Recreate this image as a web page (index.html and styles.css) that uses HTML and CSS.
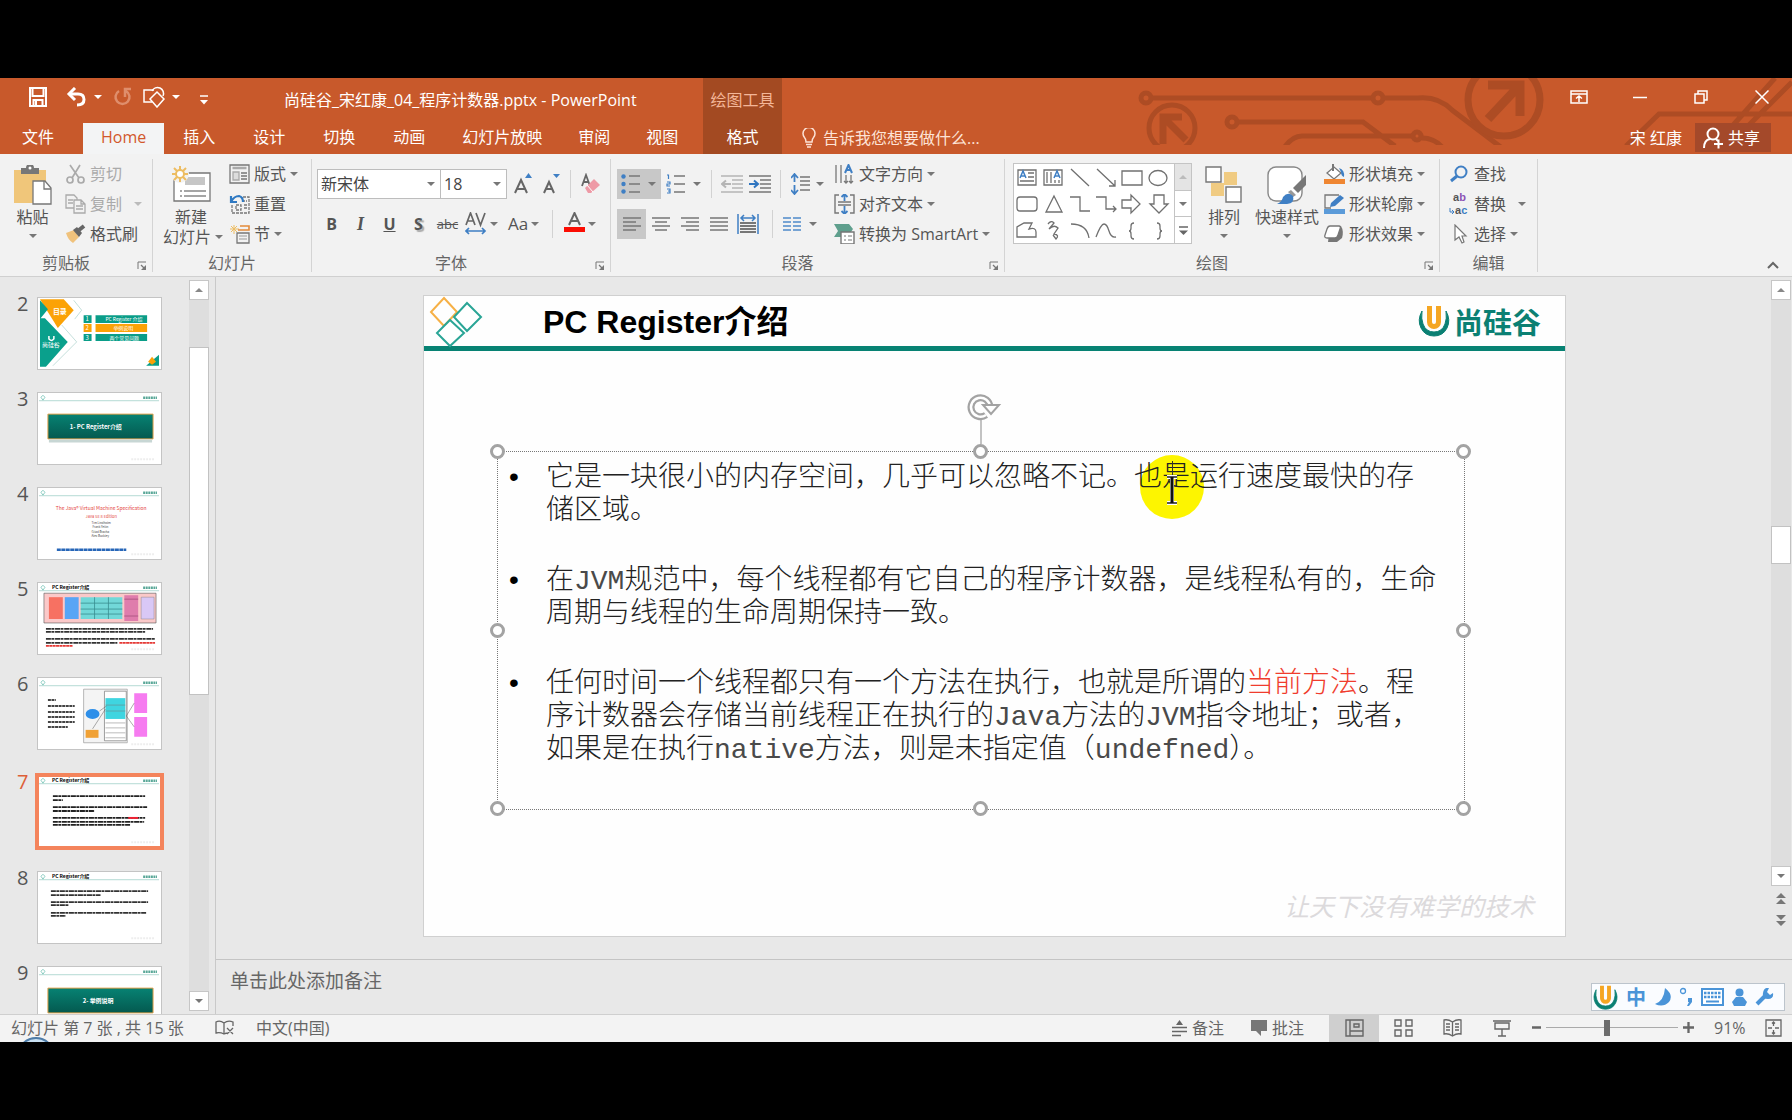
FILE: index.html
```html
<!DOCTYPE html>
<html lang="zh-CN">
<head>
<meta charset="utf-8">
<title>尚硅谷_宋红康_04_程序计数器.pptx - PowerPoint</title>
<link rel="stylesheet" href="styles.css">
</head>
<body>
<svg class="defs" aria-hidden="true">
  <defs>
    <symbol id="launch" viewBox="0 0 10 10"><path d="M1 8V1h8" fill="none" stroke="#777"/><path d="M4 4l4 4" stroke="#777" stroke-width="1.3"/><path d="M9 4v5H4z" fill="#777"/></symbol>
    <symbol id="ulogo" viewBox="0 0 32 32"><path d="M4 6Q-1 15 3 23q4 8 13 8t13-8q4-8-1-17 1 8-1 13-3 8-11 8T5 19Q3 14 4 6z" fill="#0b8073" stroke="#0b8073"/><path d="M11.500 1v16a4.500 4.500 0 0 0 9 0V1" fill="none" stroke="#f5a623" stroke-width="5"/></symbol>
    <linearGradient id="g" x1="0" y1="0" x2="0" y2="1"><stop offset="0" stop-color="#078273"/><stop offset="1" stop-color="#04594f"/></linearGradient>
    <symbol id="thead" viewBox="0 0 124 71"><path d="M3 4l2-2 2 2-2 3z" fill="none" stroke="#5bb8a8" stroke-width=".7"/><path d="M1 7.500h121" stroke="#9fd0c8" stroke-width=".8"/><path d="M106 4.500h14" stroke="#5aa898" stroke-width="2.500" stroke-dasharray="2 .6"/><path d="M94 66.500h24" stroke="#eee" stroke-width="2" stroke-dasharray="2 1"/></symbol>
  </defs>
</svg>
<div class="app">
  <header class="top">
    <svg class="art" width="656" height="67" viewBox="0 0 656 67" fill="none" stroke="#ad4c24" stroke-width="5" aria-hidden="true">
      <circle cx="10" cy="20" r="5"/><path d="M16 20h221"/><circle cx="242" cy="20" r="5"/><path d="M247 20h35q20-2 34 12l50 38"/>
      <circle cx="36" cy="50" r="23"/><path d="M27 66V39h19M28 40l22 22" stroke-width="7"/>
      <circle cx="96" cy="44" r="5"/><path d="M102 44h125l32 24M148 70q8-12 18-12h112"/><circle cx="281" cy="58" r="4"/><path d="M286 60q12 0 20 9"/>
      <circle cx="368" cy="22" r="36" stroke-width="7"/><path d="M352 7h32v31M383 8l-31 33" stroke-width="9"/>
      <path d="M490 68l33-32h133M591 54l48-54M606 54l50-50"/>
    </svg>
    <div class="quick">
      <button class="qb save" aria-label="保存"><svg width="20" height="20" viewBox="0 0 20 20" fill="none" stroke="#fff" stroke-width="2"><path d="M2 1h16v18H2zM4.500 1v8h11V1M5.500 19v-6h9v6"/><path d="M8 14v5" /></svg></button>
      <button class="qb undo" aria-label="撤消"><svg width="21" height="20" viewBox="0 0 21 20" fill="none" stroke="#fff" stroke-width="3"><path d="M3 7h9q6 0 6 5.500T11 18"/><path d="M9 1L3 7l6 6"/></svg></button>
      <i class="caret white"></i>
      <button class="qb redo" aria-label="恢复"><svg width="19" height="20" viewBox="0 0 19 20" fill="none" stroke="#df8e6c" stroke-width="2.500"><path d="M6 4a7 7 0 1 0 7 0M12 10V2h6"/></svg></button>
      <button class="qb shapes" aria-label="形状"><svg width="24" height="22" viewBox="0 0 24 22" fill="none" stroke="#fff" stroke-width="1.500"><path d="M9 16H1V4h10"/><path d="M9 5a6 6 0 1 1 11 5"/><path d="M14 6l7 7-7 8-7-8z"/></svg></button>
      <i class="caret white"></i>
      <button class="qb more" aria-label="自定义快速访问工具栏"><svg width="8" height="10" viewBox="0 0 8 10"><path d="M0 1h8" stroke="#fff" stroke-width="1.500"/><path d="M0 5h8L4 9.500z" fill="#fff"/></svg></button>
      <h1 class="doc">尚硅谷_宋红康_04_程序计数器.pptx - PowerPoint</h1>
    </div>
    <div class="ctx">绘图工具</div>
    <div class="win">
      <button aria-label="功能区显示选项"><svg width="18" height="14" viewBox="0 0 18 14" fill="none" stroke="#fff" stroke-width="1.500"><path d="M1 1h16v12H1zM1 4h16M9 12V6M6 8.500L9 6l3 2.500"/></svg></button>
      <button aria-label="最小化"><svg width="14" height="14" viewBox="0 0 14 14"><path d="M0 7.500h14" stroke="#fff" stroke-width="1.500"/></svg></button>
      <button aria-label="还原"><svg width="14" height="14" viewBox="0 0 14 14" fill="none" stroke="#fff" stroke-width="1.500"><path d="M1 4h9v9H1zM4 4V1h9v9h-3"/></svg></button>
      <button aria-label="关闭"><svg width="14" height="14" viewBox="0 0 14 14"><path d="M.5.5l13 13M13.500.5l-13 13" stroke="#fff" stroke-width="1.500"/></svg></button>
    </div>
    <nav class="tabs">
      <a class="file" href="#">文件</a><a class="on" href="#">Home</a><a href="#">插入</a><a href="#">设计</a><a href="#">切换</a><a href="#">动画</a><a class="slim" href="#">幻灯片放映</a><a class="slim" href="#">审阅</a><a class="slim" href="#">视图</a>
    </nav>
    <a class="ctxtab" href="#">格式</a>
    <div class="tell">
      <svg width="14" height="20" viewBox="0 0 14 20" fill="none" stroke="#fde3d6" stroke-width="1.500"><path d="M4 14q0-3-1.500-4.500A6 6 0 1 1 11.500 9.500Q10 11 10 14zM4 16.500h6M5 19h4"/></svg>
      <button class="ask">告诉我您想要做什么...</button>
      <button class="user">宋 红康</button>
      <button class="share"><svg width="21" height="22" viewBox="0 0 21 22" fill="none" stroke="#fff" stroke-width="2"><circle cx="10" cy="7" r="5.500"/><path d="M1 21q0-8 6-9M13 12l2 2M11 17h9M15.500 12.500v9"/></svg>共享</button>
    </div>
  </header>

  <section class="ribbon">
    <div class="group clip">
      <div class="body">
        <button class="big"><svg width="38" height="40" viewBox="0 0 38 40"><path d="M0 5h32v33H0z" fill="#f0c67a"/><path d="M7 3h5a4 4 0 0 1 8 0h5v6H7z" fill="#777"/><circle cx="16" cy="3" r="1.500" fill="#fff"/><path d="M19 16h12l6 7v16H19z" fill="#fff" stroke="#777" stroke-width="1.300"/><path d="M30 16v8h7" fill="none" stroke="#777" stroke-width="1.300"/></svg><span>粘贴</span><i class="caret"></i></button>
        <div class="list">
          <button class="row off"><svg width="21" height="20" viewBox="0 0 21 20" fill="none" stroke="#aaa" stroke-width="1.700"><path d="M5 1l9 13M15 1L7 14"/><circle cx="5" cy="16" r="3"/><circle cx="16" cy="16" r="3"/></svg>剪切</button>
          <button class="row off"><svg width="21" height="20" viewBox="0 0 21 20" fill="#f2f2f2" stroke="#aaa" stroke-width="1.300"><path d="M1 1h8l3 3v10H1zM3 6h5M3 9h5"/><path d="M9 6h7l4 4v9H9zM16 6v4h4M11 12h7M11 15h7"/></svg>复制<i class="caret far"></i></button>
          <button class="row"><svg width="21" height="20" viewBox="0 0 21 20"><path d="M1 9l8-3 5 7-6 6q-5-3-7-10z" fill="#f0c27c"/><path d="M8 6l4-3 5 6-3 4z" fill="#666"/><path d="M14 6l5-4" stroke="#666" stroke-width="4"/></svg>格式刷</button>
        </div>
      </div>
      <div class="name">剪贴板<svg class="la"><use href="#launch"/></svg></div>
    </div>

    <div class="group slides">
      <div class="body">
        <button class="big"><svg width="40" height="40" viewBox="0 0 40 40"><path d="M3 8h36v28H3z" fill="#fff" stroke="#777" stroke-width="1.300"/><path d="M14 12h20v8H14z" fill="#c6c6c6"/><path d="M9 26h2M9 31h2M13 26h22M13 31h22" stroke="#888" stroke-width="1.300"/><circle cx="9" cy="9" r="9" fill="#f2f2f2"/><path d="M9 1v16M1 9h16M3 3l12 12M15 3L3 15" stroke="#edbd62" stroke-width="2"/><circle cx="9" cy="9" r="4" fill="#fff" stroke="#edbd62" stroke-width="2"/></svg><span>新建</span><span class="l2">幻灯片<i class="caret"></i></span></button>
        <div class="list">
          <button class="row"><svg width="21" height="20" viewBox="0 0 21 20" fill="none" stroke="#777" stroke-width="1.300"><path d="M1 1h19v18H1z"/><path d="M3.500 4h14" stroke="#aaa" stroke-width="2.500"/><path d="M4 8h6v8H4z" fill="#ddd" stroke="#aaa"/><path d="M12 9h6M12 12h6M12 15h6"/></svg>版式<i class="caret"></i></button>
          <button class="row"><svg width="21" height="20" viewBox="0 0 21 20" fill="none" stroke="#777" stroke-width="1.300"><path d="M14 3h6v16H3v-8M13 7h5M7 11h5v5H7zM15 11h3M15 14h3" stroke-dasharray="3 1"/><path d="M2 8q3-6 8-6 4 1 4 6M2 2v6h6" stroke="#2f79c2" stroke-width="2.200"/></svg>重置</button>
          <button class="row"><svg width="21" height="20" viewBox="0 0 21 20" fill="none"><path d="M5 1v9M1 5h9M2 2l6 6M8 2L2 8" stroke="#edbd62"/><path d="M11 2h9v4H9" stroke="#e38a3a" stroke-width="1.600"/><path d="M8 9h12v10H8z" stroke="#777" stroke-width="1.300"/><path d="M10 12h8M10 15h8" stroke="#999"/></svg>节<i class="caret"></i></button>
        </div>
      </div>
      <div class="name">幻灯片</div>
    </div>

    <div class="group font">
      <div class="body two">
        <div class="line">
          <label class="combo face"><select aria-label="字体"><option>新宋体</option></select><i class="caret"></i></label>
          <label class="combo size"><select aria-label="字号"><option>18</option></select><i class="caret"></i></label>
          <button class="tb grow" aria-label="增大字号"><svg width="20" height="22" viewBox="0 0 20 22"><path d="M1 20L7 7l6 13M3 16h8" stroke="#666" stroke-width="2" fill="none"/><path d="M11 5l3.500-5L18 5z" fill="#3f7fc4"/></svg></button>
          <button class="tb" aria-label="减小字号"><svg width="20" height="22" viewBox="0 0 20 22"><path d="M2 20L7 9l5 11M4 16h6" stroke="#666" stroke-width="2" fill="none"/><path d="M11 1l3.500 4L18 1z" fill="#3f7fc4"/></svg></button>
          <i class="bar"></i>
          <button class="tb" aria-label="清除所有格式"><svg width="20" height="22" viewBox="0 0 20 22"><path d="M1 13L5 2l4 11M2 9h6" stroke="#666" stroke-width="1.800" fill="none"/><path d="M4 15l9-9 6 6-9 8H7z" fill="#ee9aa6"/><path d="M6 12l6 7" stroke="#fff"/></svg></button>
        </div>
        <div class="line">
          <button class="fb b">B</button><button class="fb i">I</button><button class="fb u">U</button><button class="fb s">S</button><button class="fb x">abc</button>
          <button class="fc" aria-label="字符间距"><svg width="22" height="24" viewBox="0 0 22 24"><path d="M1 13L5.500 1 10 13M2.500 9h6M11 1l4.500 12L20 1" stroke="#666" stroke-width="1.700" fill="none"/><path d="M1 19h19M4 16l-3 3 3 3M17 16l3 3-3 3" stroke="#3f7fc4" stroke-width="1.700" fill="none"/></svg><i class="caret"></i></button>
          <button class="fc aa">Aa<i class="caret"></i></button>
          <i class="bar"></i>
          <button class="fc color" aria-label="字体颜色"><svg width="21" height="24" viewBox="0 0 21 24"><path d="M5 13L10.500 1 16 13M7 9h7" stroke="#666" stroke-width="2" fill="none"/><path d="M0 15h21v5H0z" fill="#fb0d03"/></svg><i class="caret"></i></button>
        </div>
      </div>
      <div class="name">字体<svg class="la"><use href="#launch"/></svg></div>
    </div>

    <div class="group para">
      <div class="body">
        <div class="two">
          <div class="line">
            <button class="pc sel" aria-label="项目符号"><svg width="19" height="20" viewBox="0 0 19 20"><path d="M8 2h11M8 10h11M8 18h11" stroke="#777" stroke-width="1.500"/><g fill="#3f7fc4"><circle cx="2.500" cy="2.500" r="2.200"/><circle cx="2.500" cy="10" r="2.200"/><circle cx="2.500" cy="17.500" r="2.200"/></g></svg><i class="caret"></i></button>
            <button class="pc num" aria-label="编号"><svg width="19" height="20" viewBox="0 0 19 20"><path d="M8 2h11M8 10h11M8 18h11" stroke="#777" stroke-width="1.500"/><path d="M1 1h1.500v4M1 8h3v2H1v2h3M1 15h3v4H1M2 17h2" stroke="#3f7fc4" stroke-width="1.200" fill="none"/></svg><i class="caret"></i></button>
            <i class="bar"></i>
            <button class="pb" aria-label="降低列表级别"><svg width="22" height="18" viewBox="0 0 22 18" stroke="#b5b5b5" fill="none" stroke-width="1.500"><path d="M0 1h22M11 5h11M11 9h11M11 13h11M0 17h22"/><path d="M10 9H1M5 5.500L1 9l4 3.500" stroke-width="2"/></svg></button>
            <button class="pb" aria-label="提高列表级别"><svg width="22" height="18" viewBox="0 0 22 18" stroke="#777" fill="none" stroke-width="1.500"><path d="M0 1h22M11 5h11M11 9h11M11 13h11M0 17h22"/><path d="M0 9h9M5 5.500L9 9l-4 3.500" stroke="#2f75c0" stroke-width="2"/></svg></button>
            <i class="bar near"></i>
            <button class="pc ls" aria-label="行距"><svg width="20" height="22" viewBox="0 0 20 22"><path d="M9 4h10M9 8h10M9 12h10M9 17h10" stroke="#777" stroke-width="1.500"/><path d="M3.500 1v8M0 5l3.500-4L7 5M3.500 12v9M0 17l3.500 4L7 17" stroke="#3f7fc4" stroke-width="1.800" fill="none"/></svg><i class="caret"></i></button>
          </div>
          <div class="line">
            <button class="al sel" aria-label="左对齐"><svg width="18" height="14" viewBox="0 0 18 14"><path d="M0 1h18M0 5h13M0 9h18M0 13h13" stroke="#777" stroke-width="1.500"/></svg></button>
            <button class="al" aria-label="居中"><svg width="18" height="14" viewBox="0 0 18 14"><path d="M0 1h18M3 5h12M0 9h18M3 13h12" stroke="#777" stroke-width="1.500"/></svg></button>
            <button class="al" aria-label="右对齐"><svg width="18" height="14" viewBox="0 0 18 14"><path d="M0 1h18M5 5h13M0 9h18M5 13h13" stroke="#777" stroke-width="1.500"/></svg></button>
            <button class="al" aria-label="两端对齐"><svg width="18" height="14" viewBox="0 0 18 14"><path d="M0 1h18M0 5h18M0 9h18M0 13h18" stroke="#777" stroke-width="1.500"/></svg></button>
            <button class="al" aria-label="分散对齐"><svg width="22" height="20" viewBox="0 0 22 20" fill="none"><path d="M1 0v20M21 0v20M4 4h14M7 1L4 4l3 3M15 1l3 3-3 3" stroke="#3f7fc4" stroke-width="1.500"/><path d="M3 9h16M3 12h16M3 15h16M3 18h16" stroke="#777" stroke-width="1.800"/></svg></button>
            <i class="bar"></i>
            <button class="pc cols" aria-label="分栏"><svg width="18" height="14" viewBox="0 0 18 14"><path d="M0 1h8M10 1h8M0 5h8M10 5h8M0 9h8M10 9h8M0 13h8M10 13h8" stroke="#4f8bca" stroke-width="1.600"/></svg><i class="caret"></i></button>
          </div>
        </div>
        <div class="list">
          <button class="row"><svg width="21" height="20" viewBox="0 0 21 20" fill="none" stroke="#777" stroke-width="1.300"><path d="M2 1v18M7 1v18M12 11v8M17 11v8M10 17l2 2 2-2M15 17l2 2 2-2"/><path d="M11 9l3.500-8L18 9M12 6h5" stroke="#3f7fc4" stroke-width="2"/></svg>文字方向<i class="caret"></i></button>
          <button class="row"><svg width="21" height="20" viewBox="0 0 21 20" fill="none" stroke="#777" stroke-width="1.400"><path d="M5 1H1v18h4M16 1h4v18h-4M4 8h13M4 11h13"/><path d="M10.500 0v7M7.500 3l3-3 3 3M10.500 12v8M7.500 17l3 3 3-3" stroke="#3f7fc4" stroke-width="1.800"/></svg>对齐文本<i class="caret"></i></button>
          <button class="row"><svg width="21" height="20" viewBox="0 0 21 20"><path d="M0 0h15l4 5-2 3H7v5H0l4-6z" fill="#5f9f8d"/><path d="M7 8h13v12H7z" fill="#fff" stroke="#777" stroke-width="1.400"/><path d="M10 12h2M14 12h4M10 16h2M14 16h4" stroke="#777"/></svg>转换为 SmartArt<i class="caret"></i></button>
        </div>
      </div>
      <div class="name">段落<svg class="la"><use href="#launch"/></svg></div>
    </div>

    <div class="group draw">
      <div class="body">
        <div class="gallery">
          <svg class="cells" viewBox="0 0 160 80" width="160" height="80" fill="none" stroke="#707070" stroke-width="1.300">
            <path d="M4 6h18v15H4zM14 9h6M14 13h6M6 17h14" /><path d="M6 14l3-7 3 7M7 12h4" stroke="#3f7fc4" stroke-width="1.500"/>
            <path d="M30 6h18v15H30zM33 8v11M37 8v11M41 16v3M45 16v3"/><path d="M40 14l3-7 3 7M41 12h4" stroke="#3f7fc4" stroke-width="1.500"/>
            <path d="M57 5l18 17M83 5l18 17M101 16v6h-6M108 7h20v14h-20z"/><ellipse cx="144" cy="14" rx="9" ry="7.500"/>
            <rect x="3" y="33" width="20" height="14" rx="3"/><path d="M40 32l8 16H32zM56 33h10v14h10M82 33h10v12h10M99 42l3 3-3 3M108 36h9v-5l9 9-9 9v-5h-9zM140 31v9h-4l9 9 9-9h-4v-9z"/>
            <path d="M3 73V63l7-4h8l-3 6q7-2 7 3v5zM34 60q3-4 6-1l-5 6q5-5 9-1l-4 6q6 1 2 5l-3-4M57 60q16 0 18 14M82 73q5-13 8-13 3 0 5 7t7 6M120 59q-3 0-3 3v2q0 3-2 3 2 0 2 3v2q0 3 3 3M143 59q3 0 3 3v2q0 3 2 3-2 0-2 3v2q0 3-3 3"/>
          </svg>
          <div class="gbtn"><button class="dim" aria-label="上一行"><i class="caret up"></i></button><button aria-label="下一行"><i class="caret"></i></button><button aria-label="更多形状"><svg width="9" height="9" viewBox="0 0 9 9"><path d="M0 1h9" stroke="#666" stroke-width="1.500"/><path d="M0 4.500h9L4.500 9z" fill="#666"/></svg></button></div>
        </div>
        <button class="big arr"><svg width="38" height="38" viewBox="0 0 38 38"><path d="M19 6h13v13H19zM6 17h13v13H6z" fill="#f0cb82"/><g fill="#fff" stroke="#777" stroke-width="1.400"><path d="M1 1h15v15H1zM21 21h15v15H21z"/></g></svg><span>排列</span><i class="caret"></i></button>
        <button class="big sty"><svg width="40" height="40" viewBox="0 0 40 40"><rect x="1" y="2" width="34" height="34" rx="8" fill="#fff" stroke="#888" stroke-width="1.400"/><path d="M39 10v10l-8 8-5-5z" fill="#777"/><path d="M24 25l5 5-3 2-5-5z" fill="#999"/><path d="M10 39q5-2 6-7 5-6 10-1 2 7-6 8z" fill="#3f7fc4"/></svg><span>快速样式</span><i class="caret"></i></button>
        <div class="list">
          <button class="row"><svg width="21" height="20" viewBox="0 0 21 20"><path d="M3 9l7-6 7 6-7 6z" fill="#fff" stroke="#777" stroke-width="1.300"/><path d="M9 0v7" stroke="#777" stroke-width="2"/><path d="M15 4q6 2 5 9-3-1-3-5z" fill="#3f7fc4"/><path d="M0 15h21v5H0z" fill="#ef8632"/></svg>形状填充<i class="caret"></i></button>
          <button class="row"><svg width="21" height="20" viewBox="0 0 21 20"><path d="M15 1H1v13h6" fill="none" stroke="#777" stroke-width="1.300"/><path d="M6 13l1-4 9-8 4 3-9 8z" fill="#3f7fc4"/><path d="M0 15h21v5H0z" fill="#5b9bd9"/></svg>形状轮廓<i class="caret"></i></button>
          <button class="row"><svg width="21" height="20" viewBox="0 0 21 20"><path d="M6 2h11q3 5 1 12l-5 4H4z" fill="#777"/><path d="M6 2h9q2 0 1 3l-2 6q-1 3-3 3H3q-3 0-2-3l2-6q1-3 3-3z" fill="#fff" stroke="#777" stroke-width="1.300"/></svg>形状效果<i class="caret"></i></button>
        </div>
      </div>
      <div class="name">绘图<svg class="la"><use href="#launch"/></svg></div>
    </div>

    <div class="group edit">
      <div class="body">
        <div class="list">
          <button class="row"><svg width="21" height="20" viewBox="0 0 21 20" fill="none" stroke="#3f7fc4"><circle cx="12" cy="8" r="5.500" stroke-width="2"/><path d="M8 12l-6 5" stroke-width="3"/></svg>查找</button>
          <button class="row"><span class="abac"><span>a<em>b</em></span><span class="ac"><svg width="5" height="6" viewBox="0 0 5 6" fill="none" stroke="#3f7fc4"><path d="M1 0v4h4M3 2l2 2-2 2"/></svg><span>a<em class="blue">c</em></span></span></span>替换<i class="caret far"></i></button>
          <button class="row"><svg width="21" height="20" viewBox="0 0 21 20"><path d="M6 1v15l4-3 3 6 2-1-2-6h4z" fill="#fff" stroke="#777" stroke-width="1.200"/></svg>选择<i class="caret"></i></button>
        </div>
      </div>
      <div class="name">编辑</div>
    </div>
    <button class="fold" aria-label="折叠功能区"><svg width="12" height="8" viewBox="0 0 12 8"><path d="M1 7l5-5 5 5" fill="none" stroke="#666" stroke-width="2"/></svg></button>
  </section>

  <main class="work">
    <aside class="pane">
      <ol class="thumbs">
        <li><span>2</span><svg viewBox="0 0 124 71"><path d="M2 1h24l10 11-16 18z" fill="#fba206"/><path d="M2 2l8 9-8 10zM2 20h5l23 24L8 69H2z" fill="#0aa08c"/><path d="M36 2l8 10-7 9M24 27l15 17-24 24" fill="none" stroke="#9cc9c2" stroke-width=".6"/><text x="15" y="16" font-size="7" font-weight="700" fill="#fff">目录</text><path d="M11 38v3q3 3 5 0v-3" fill="none" stroke="#fff" stroke-width="1.500"/><text x="4" y="49" font-size="6" fill="#fff">尚硅谷</text><path d="M46 17h8v8h-8zM58 17h52v8H58zM46 36h8v7h-8zM58 36h52v7H58z" fill="#0a9d88"/><path d="M46 26h8v8h-8zM58 26h52v8H58z" fill="#fba206"/><g fill="#fff" font-size="6"><text x="48" y="23">1</text><text x="48" y="32">2</text><text x="48" y="42">3</text><text x="68" y="23" font-size="5">PC Register 介绍</text><text x="76" y="32" font-size="5">举例说明</text><text x="72" y="42" font-size="5">两个常见问题</text></g><path d="M109 68l13-11v11z" fill="#0a9d88"/><path d="M111 64l4-5 4 5-4 3z" fill="#fba206"/></svg></li>
        <li><span>3</span><svg viewBox="0 0 124 71"><use href="#thead"/><path d="M10 21h106v25H10z" fill="url(#g)" stroke="#e6a34c"/><path d="M11 48h104" stroke="#c7d6d4" stroke-width="3"/><text x="32" y="36" font-size="6" font-weight="700" fill="#fff">1- PC Register介绍</text></svg></li>
        <li><span>4</span><svg viewBox="0 0 124 71"><use href="#thead"/><g fill="#e4443e" font-size="5"><text x="18" y="22">The Java® Virtual Machine Specification</text><text x="48" y="30" font-size="4">Java SE 8 Edition</text></g><g fill="#444" font-size="3"><text x="54" y="36">Tim Lindholm</text><text x="55" y="40">Frank Yellin</text><text x="54" y="45">Gilad Bracha</text><text x="54" y="49">Alex Buckley</text></g><path d="M19 62h70" stroke="#2766b8" stroke-width="2.500" stroke-dasharray="4 .5"/></svg></li>
        <li><span>5</span><svg viewBox="0 0 124 71"><use href="#thead"/><text x="14" y="6" font-size="5" font-weight="700">PC Register介绍</text><path d="M6 10h113v30H6z" fill="#fbc9c9" stroke="#555" stroke-width=".6"/><path d="M11 14h14v22H11z" fill="#f77162"/><path d="M27 14h14v22H27z" fill="#58a5f5"/><path d="M43 14h42v22H43z" fill="#72d8d8"/><path d="M43 20h42M43 26h42M43 31h42M57 14v22M71 14v22" stroke="#398d90" stroke-width=".8"/><path d="M87 12h14v26H87z" fill="#df7dac"/><path d="M87 16h14M87 33h14" stroke="#a34f7c" stroke-width=".8"/><path d="M104 14h13v22h-13z" fill="#d9c8f6" stroke="#777" stroke-width=".4"/><path d="M8 46h108M8 49h100M8 56h110M8 60h72" stroke="#333" stroke-width="1.800" stroke-dasharray="5 .5 3 .7"/><path d="M82 60h36M8 63h27" stroke="#e53935" stroke-width="1.800" stroke-dasharray="3 .4"/></svg></li>
        <li><span>6</span><svg viewBox="0 0 124 71"><use href="#thead"/><path d="M10 22h8M10 28h27M10 34h27M10 39h27M10 44h27M10 49h20" stroke="#444" stroke-width="2" stroke-dasharray="3 .6"/><path d="M46 11h44v54H46z" fill="#f4f4f4" stroke="#999" stroke-width=".7"/><path d="M67 13h22v50H67z" fill="#fff" stroke="#777" stroke-width=".7"/><path d="M68 20h20v21H68z" fill="#3fd5e0"/><path d="M68 45h20M68 50h20M68 55h20M68 60h20M68 27h20M68 33h20" stroke="#777" stroke-width=".5"/><ellipse cx="55" cy="36" rx="7" ry="5" fill="#2e8fe9"/><path d="M48 52h13v8H48z" fill="#f0a135"/><path d="M97 15h13v20H97zM97 39h13v20H97z" fill="#f67bf0"/><path d="M62 33l7-5M55 51l13-20M89 38l8-13M89 38l8 11" stroke="#555" stroke-width=".5"/></svg></li>
        <li class="cur"><span>7</span><svg viewBox="0 0 124 71"><use href="#thead"/><text x="14" y="6" font-size="5" font-weight="700">PC Register介绍</text><g stroke="#222" stroke-width="1.800" stroke-dasharray="5 .5 3 .6" fill="none"><path d="M15 20h93M15 24h10M15 31h95M15 35h42M15 42h93M15 46h92M15 49h78"/></g><path d="M91 42h10" stroke="#e23" stroke-width="2"/></svg></li>
        <li><span>8</span><svg viewBox="0 0 124 71"><use href="#thead"/><text x="14" y="6" font-size="5" font-weight="700">PC Register介绍</text><g stroke="#333" stroke-width="1.800" stroke-dasharray="5 .5 3 .6"><path d="M13 19h98M13 23h50M13 30h98M13 33h18M13 41h96M13 44h15"/></g></svg></li>
        <li><span>9</span><svg viewBox="0 0 124 71"><use href="#thead"/><path d="M10 21h106v25H10z" fill="url(#g)" stroke="#e6a34c"/><text x="45" y="36" font-size="6" font-weight="700" fill="#fff">2- 举例说明</text></svg></li>
      </ol>
      <div class="scroll left"><button aria-label="向上"><i class="caret up"></i></button><i class="thumb"></i><button aria-label="向下"><i class="caret"></i></button></div>
    </aside>
    <section class="editor">
      <div class="canvas">
        <div class="stage">
          <article class="slide">
            <header class="shead">
              <svg class="dia" width="56" height="50" viewBox="0 0 56 50" fill="none" stroke-width="2"><path d="M20 2l13 14-13 14L7 16z" stroke="#f6b046"/><path d="M43 7l14 14-14 14-13-14z" fill="#fff" stroke="#2aa596"/><path d="M26 24l14 13-14 13-13-13z" fill="#fff" stroke="#2aa596"/></svg>
              <h2>PC Register介绍</h2>
              <div class="brand"><svg width="32" height="32"><use href="#ulogo"/></svg>尚硅谷</div>
            </header>
            <i class="halo"></i>
            <div class="box">
              <ul>
                <li>它是一块很小的内存空间，几乎可以忽略不记。也是运行速度最快的存<br>储区域。</li>
                <li>在<span class="code">JVM</span>规范中，每个线程都有它自己的程序计数器，是线程私有的，生命<br>周期与线程的生命周期保持一致。</li>
                <li>任何时间一个线程都只有一个方法在执行，也就是所谓的<mark>当前方法</mark>。程<br>序计数器会存储当前线程正在执行的<span class="code">Java</span>方法的<span class="code">JVM</span>指令地址；或者，<br>如果是在执行<span class="code">native</span>方法，则是未指定值（<span class="code">undefned</span>）。</li>
              </ul>
              <i class="h nw"></i><i class="h n"></i><i class="h ne"></i><i class="h w"></i><i class="h e"></i><i class="h sw"></i><i class="h so"></i><i class="h se"></i>
              <svg class="rot" width="34" height="60" viewBox="0 0 34 60" fill="none" stroke="#a3a3a3"><path d="M17 28v26" stroke-width="1.300"/><path d="M26 17a9.500 9.500 0 1 0-4 8" stroke-width="7"/><path d="M26 17a9.500 9.500 0 1 0-4 8" stroke="#fff" stroke-width="2.500"/><path d="M19 15h16l-8 9z" fill="#fff" stroke-width="2"/></svg>
            </div>
            <svg class="ibeam" width="12" height="44" viewBox="0 0 12 44"><path d="M6.500 0v18" stroke="#333"/><path d="M1 16h10M1 42h10M6 16v26" stroke="#fff" stroke-width="4"/><path d="M1 16h10M1 42h10" stroke="#222" stroke-width="1.500"/><path d="M6 16v26" stroke="#111" stroke-width="3"/></svg>
            <p class="motto">让天下没有难学的技术</p>
          </article>
        </div>
        <div class="side">
          <div class="scroll right"><button aria-label="向上"><i class="caret up"></i></button><i class="thumb"></i><button aria-label="向下"><i class="caret"></i></button></div>
          <button class="jump" aria-label="上一张幻灯片"><svg width="10" height="12" viewBox="0 0 10 12" fill="#777"><path d="M0 6l5-5 5 5zM0 12l5-5 5 5z"/></svg></button>
          <button class="jump" aria-label="下一张幻灯片"><svg width="10" height="12" viewBox="0 0 10 12" fill="#777"><path d="M0 0h10L5 5zM0 6h10l-5 5z"/></svg></button>
        </div>
      </div>
      <div class="notes">单击此处添加备注</div>
    </section>
    <div class="ime">
      <svg width="25" height="27" viewBox="0 0 32 32"><use href="#ulogo"/></svg><b>中</b>
      <svg width="17" height="20" viewBox="0 0 17 20"><path d="M11 1q9 7 4 14-6 6-14 2 9-3 10-16z" fill="#4a94d8"/></svg>
      <svg width="14" height="20" viewBox="0 0 14 20"><circle cx="4" cy="4" r="2.500" fill="none" stroke="#4a94d8" stroke-width="1.300"/><path d="M9 11h4v4l-3 4H8l2-4H9z" fill="#4a94d8"/></svg>
      <svg width="23" height="18" viewBox="0 0 23 18"><path d="M1 1h21v16H1z" fill="#fff" stroke="#4a94d8" stroke-width="2"/><path d="M3 5h17M3 9h17" stroke="#4a94d8" stroke-width="2.500" stroke-dasharray="2.500 1"/><path d="M5 13.500h13" stroke="#4a94d8" stroke-width="2"/></svg>
      <svg width="15" height="18" viewBox="0 0 15 18" fill="#4a94d8"><circle cx="7.500" cy="4.500" r="4"/><path d="M4 9h7l4 5-2 4H2l-2-4z"/></svg>
      <svg width="19" height="18" viewBox="0 0 19 18"><path d="M2 16l9-9" stroke="#4a94d8" stroke-width="4"/><path d="M14 0l-2 4 3 3 3-2q1 6-5 6t-5-6 6-5z" fill="#4a94d8"/></svg>
    </div>
  </main>

  <footer class="status">
    <span class="pg">幻灯片 第 7 张 , 共 15 张</span>
    <svg class="spell" width="20" height="16" viewBox="0 0 20 16" fill="none" stroke="#666" stroke-width="1.300"><path d="M9 14V3Q5 0 1 2v11q4-1 8 1 2-1 4-1M9 3q4-3 9-1v4M12 14l6-6M12 8l6 6"/></svg>
    <span class="lang">中文(中国)</span>
    <button class="nt"><svg width="15" height="18" viewBox="0 0 15 18"><path d="M4 6l3.500-5L11 6z" fill="#666"/><path d="M0 8.500h15M0 12.500h15M0 16.500h9" stroke="#666" stroke-width="1.400"/></svg>备注</button>
    <button class="cm"><svg width="16" height="16" viewBox="0 0 16 16"><path d="M0 0h16v11h-6v5l-5-5H0z" fill="#777"/></svg>批注</button>
    <button class="vw on" aria-label="普通视图"><svg width="19" height="18" viewBox="0 0 19 18" fill="none" stroke="#666" stroke-width="1.400"><path d="M1 1h17v16H1zM5 1v16M5 12h13M9 5h5v3H9z"/></svg></button>
    <button class="vw" aria-label="幻灯片浏览"><svg width="19" height="18" viewBox="0 0 19 18" fill="none" stroke="#666" stroke-width="1.400"><path d="M1 1h6v6H1zM12 1h6v6h-6zM1 11h6v6H1zM12 11h6v6h-6z"/></svg></button>
    <button class="vw" aria-label="阅读视图"><svg width="19" height="18" viewBox="0 0 19 18" fill="none" stroke="#666" stroke-width="1.300"><path d="M9.500 3Q5 0 1 1v14q4-1 8.500 2 4.500-3 8.500-2V1q-4-1-8.500 2zv14M3 5h4M3 8h4M3 11h4M12 5h4M12 8h4M12 11h4"/></svg></button>
    <button class="vw" aria-label="幻灯片放映"><svg width="18" height="18" viewBox="0 0 18 18" fill="none" stroke="#666" stroke-width="1.400"><path d="M0 2h18M2 4h14v6H2zM9 10v7M5 17h8" /></svg></button>
    <button class="zm" aria-label="缩小"><svg width="9" height="9" viewBox="0 0 9 9"><path d="M0 4.500h9" stroke="#666" stroke-width="2.500"/></svg></button>
    <input class="zr" type="range" min="0" max="100" value="46" aria-label="缩放">
    <button class="zm" aria-label="放大"><svg width="11" height="11" viewBox="0 0 11 11"><path d="M0 5.500h11M5.500 0v11" stroke="#666" stroke-width="2.300"/></svg></button>
    <button class="pct">91%</button>
    <button class="fit" aria-label="使幻灯片适应当前窗口"><svg width="17" height="18" viewBox="0 0 17 18" fill="none" stroke="#666" stroke-width="1.300"><path d="M1 1h15v16H1zM8.500 3v4M8.500 11v4M3 9h4M10 9h4M7 4.500L8.500 3 10 4.500M7 13.500L8.500 15l1.500-1.500"/></svg></button>
    <i class="orb"></i>
  </footer>
</div>
</body>
</html>
```
FILE: styles.css
```css
* { box-sizing: border-box; }
body {
  margin: 0;
  padding: 78px 0;
  background: #000;
  color: #555;
  font: 16px/20px "Open Sans", "Noto Sans CJK SC", sans-serif;
  overflow: hidden;
}
button {
  margin: 0;
  padding: 0;
  border: 0;
  background: none;
  color: inherit;
  font: inherit;
  display: flex;
  align-items: center;
  white-space: nowrap;
}
a { color: inherit; text-decoration: none; }
svg { flex: none; display: block; }
.defs { position: absolute; width: 0; height: 0; }
.app {
  height: calc(100vh - 156px);
  display: flex;
  flex-direction: column;
  background: #e8e8e8;
  overflow: hidden;
}

.caret {
  flex: none;
  width: 0;
  height: 0;
  border: 4px solid transparent;
  border-top-color: #777;
  border-bottom: 0;
}
.caret.white { border-top-color: #fff; }
.caret.up { border: 4px solid transparent; border-bottom-color: #888; border-top: 0; }

/* title bar and tabs */
.top {
  position: relative;
  display: grid;
  grid-template-columns: 703px 79px 1fr;
  grid-template-rows: 45px 31px;
  background: #c8592b;
  color: #fff;
}
.art { position: absolute; right: 0; top: 0; }
.quick { display: flex; align-items: center; padding: 0 0 8px 28px; }
.undo { margin: 0 7px 0 18px; }
.redo { margin: 0 11px 0 11px; }
.shapes { margin-right: 5px; }
.more { margin: 6px 0 0 20px; }
.doc { margin: 6px 0 0 76px; font-size: 16px; font-weight: 400; line-height: 20px; white-space: nowrap; }
.ctx { background: #a34a22; color: #f3b698; display: flex; align-items: center; justify-content: center; padding-bottom: 2px; }
.win { position: relative; display: flex; justify-content: flex-end; padding-bottom: 8px; }
.win button { width: 61px; justify-content: center; }
.tabs { display: flex; }
.tabs a { padding: 0 19px; line-height: 28px; white-space: nowrap; }
.tabs .file { padding: 0 29px 0 22px; }
.tabs .on { background: #f3f4f5; color: #d2582c; padding: 0 18px; }
.tabs .slim { padding: 0 18px; }
.ctxtab { background: #a34a22; text-align: center; line-height: 28px; }
.tell { position: relative; display: flex; align-items: center; padding: 0 0 2px 20px; color: #fde3d6; }
.ask { margin-left: 7px; }
.user { margin-left: auto; color: #fff; }
.share { margin: 0 21px 0 13px; width: 76px; height: 29px; gap: 4px; padding-left: 8px; background: #a4492a; color: #fff; }

/* ribbon */
.ribbon {
  position: relative;
  display: flex;
  height: 123px;
  flex: none;
  padding: 5px 0 0;
  background: #f2f2f2;
  border-bottom: 1px solid #d0d0d0;
}
.group { flex: none; height: 113px; border-right: 1px solid #d4d4d4; display: flex; flex-direction: column; }
.clip { width: 153px; }
.slides { width: 159px; }
.font { width: 299px; }
.para { width: 394px; }
.draw { width: 435px; }
.edit { width: 98px; }
.body { display: flex; flex: none; height: 90px; }
.name { position: relative; text-align: center; line-height: 29px; color: #666; padding-right: 20px; }
.slides .name, .edit .name { padding-right: 0; }
.la { position: absolute; right: 5px; top: 12px; width: 10px; height: 10px; }
.big { flex-direction: column; padding-top: 6px; width: 65px; flex: none; height: 90px; }
.big svg { margin-bottom: 2px; height: 40px; }
.big .caret { margin-top: 7px; }
.big .l2 { display: flex; align-items: center; gap: 4px; padding-left: 4px; }
.big .l2 .caret { margin: 0; }
.slides .big { width: 76px; }
.list { display: flex; flex-direction: column; }
.row { height: 30px; gap: 4px; }
.row .far { margin-left: 8px; }
.off { color: #aaa; }
.off .caret { border-top-color: #bbb; }
.two { display: flex; flex-direction: column; gap: 10px; padding-top: 10px; height: 90px; }
.line { display: flex; align-items: center; height: 30px; }
.font .line { padding-left: 5px; }
.combo { position: relative; display: flex; align-items: center; height: 30px; background: #fff; border: 1px solid #bdbdbd; padding-right: 5px; }
.combo select { appearance: none; border: 0; background: none; font: inherit; color: #444; padding: 0 3px; flex: 1; height: 28px; min-width: 0; }
.face { width: 124px; }
.size { width: 66px; border-left-width: 0; }
.tb { width: 28px; justify-content: center; flex: none; }
.grow { margin-left: 3px; }
.bar { flex: none; width: 1px; height: 28px; background: #d2d2d2; margin: 0 8px; }
.font .bar { margin: 0 6px 0 4px; }
.fb { width: 29px; justify-content: center; flex: none; color: #555; }
.b { font-weight: 700; }
.i { font-family: "Liberation Serif", serif; font-style: italic; font-weight: 700; font-size: 18px; }
.u { text-decoration: underline; font-weight: 700; }
.s { font-weight: 700; text-shadow: 2px 2px 1px #aaa; }
.x { text-decoration: line-through; font-size: 13px; }
.fc { gap: 3px; width: 40px; margin-left: 3px; }
.aa { font-size: 17px; }
.color { margin-left: 5px; }
.para .two { width: 223px; padding-left: 6px; flex: none; }
.pc { gap: 8px; height: 30px; flex: none; }
.sel { background: #c8c8c8; }
.pc.sel { width: 44px; padding-left: 4px; }
.num { margin-left: 5px; }
.para .bar { margin: 0 9px 0 10px; }
.pb { width: 28px; flex: none; }
.para .near { margin: 0 10px 0 3px; }
.ls { gap: 5px; }
.al { width: 29px; height: 30px; justify-content: center; flex: none; }
.cols { margin-left: 1px; }
.gallery { display: flex; margin: 4px 0 0 8px; width: 179px; height: 81px; border: 1px solid #c4c4c4; background: #fff; flex: none; overflow: hidden; }
.gbtn { flex: 1; display: flex; flex-direction: column; border-left: 1px solid #c4c4c4; }
.gbtn button { flex: 1; justify-content: center; }
.gbtn button + button { border-top: 1px solid #c4c4c4; }
.gbtn .dim { background: #e4e4e4; }
.dim .caret.up { border-bottom-color: #bbb; }
.arr { margin-left: 7px; width: 50px; }
.sty { width: 74px; margin-left: 1px; }
.edit .list { margin-left: 9px; }
.abac { width: 21px; font: 700 11px/13px "Liberation Sans", sans-serif; display: flex; flex-direction: column; }
.abac em { color: #8b52b5; font-style: normal; }
.abac .blue { color: #3f7fc4; }
.ac { display: flex; align-items: center; gap: 1px; }
.fold { position: absolute; right: 13px; bottom: 7px; }

/* workspace */
.work { position: relative; flex: 1; min-height: 0; display: flex; }
.pane { flex: none; width: 216px; display: flex; overflow: hidden; border-right: 1px solid #c9c9c9; padding-right: 6px; }
.thumbs { list-style: none; margin: 0; padding: 21px 0 0; width: 189px; font: 20px/20px "Open Sans", sans-serif; }
.thumbs li { display: flex; height: 71px; margin-bottom: 24px; }
.thumbs li span { width: 38px; padding-left: 17px; margin-top: -4px; flex: none; }
.thumbs svg { width: 123px; height: 71px; background: #fff; outline: 1px solid #c4c4c4; font-family: "Noto Sans CJK SC", sans-serif; }
.thumbs .cur { margin: 27px 0 25px; color: #dd5f38; }
.thumbs .cur svg { outline: 4px solid #f4845c; outline-offset: -1px; }
.scroll { display: flex; flex-direction: column; width: 20px; background: #dedede; }
.scroll button { height: 20px; border: 1px solid #c6c6c6; background: #fff; justify-content: center; flex: none; }
.scroll button:last-child { margin-top: auto; }
.thumb { display: block; background: #fff; border: 1px solid #c2c2c2; }
.left { margin: 3px 0; }
.left .thumb { margin-top: 47px; height: 348px; }
.editor { flex: 1; display: flex; flex-direction: column; min-width: 0; }
.canvas { flex: 1; display: flex; min-height: 0; }
.stage { flex: 1; padding: 18px 0 0 2px; display: flex; justify-content: center; align-items: flex-start; }
.side { width: 21px; padding: 3px 2px 0 0; display: flex; flex-direction: column; align-items: center; }
.right { height: 606px; }
.right .thumb { margin-top: 226px; height: 38px; }
.jump { height: 23px; }
.notes { height: 55px; flex: none; border-top: 1px solid #c4c4c4; padding: 9px 0 0 14px; font-size: 19px; line-height: 24px; color: #666; }

/* slide */
.slide { position: relative; width: 100%; max-width: 1143px; height: 642px; background: #fefefe; border: 1px solid #d0d0d0; }
.shead { display: flex; align-items: center; height: 55px; border-bottom: 5px solid #078273; }
.dia { overflow: visible; }
.shead h2 { margin: 2px 0 0 63px; font: 700 32px/40px "Liberation Sans", "Noto Sans CJK SC", sans-serif; color: #000; }
.brand { margin: 0 24px 0 auto; display: flex; align-items: center; gap: 4px; font: 700 29px/36px "Noto Sans CJK SC", sans-serif; color: #0b8073; }
.box { position: relative; margin: 100px 0 0 73px; width: 968px; height: 359px; border: 1px dotted #777; }
.box ul { list-style: none; margin: 0; padding: 8px 0 0 48px; font: 300 28px/33px "Liberation Mono", "Noto Sans CJK SC", monospace; color: #222; white-space: nowrap; }
.box li { margin-bottom: 35px; }
.box li::before { content: "•"; display: inline-block; width: 37px; margin-left: -37px; font-family: "Liberation Sans", sans-serif; color: #000; }
.code { color: #4a4a4a; }
.box mark { background: none; color: #f03c2d; }
.h { position: absolute; width: 15px; height: 15px; border: 3px solid #a3a3a3; border-radius: 50%; background: #fff; margin: -8px; }
.nw { left: 0; top: 0; }
.n { left: 50%; top: 0; }
.ne { left: 100%; top: 0; }
.w { left: 0; top: 50%; }
.e { left: 100%; top: 50%; }
.sw { left: 0; top: 100%; }
.so { left: 50%; top: 100%; }
.se { left: 100%; top: 100%; }
.rot { position: absolute; left: 50%; margin-left: -17px; top: -62px; overflow: visible; }
.halo { position: absolute; left: 716px; top: 159px; width: 64px; height: 64px; border-radius: 50%; background: #fdf500; }
.ibeam { position: absolute; left: 742px; top: 165px; }
.motto { position: absolute; right: 31px; bottom: 16px; margin: 0; font: italic 400 25px/30px "Noto Sans CJK SC", sans-serif; color: #dcdadc; }

.ime { position: absolute; right: 7px; bottom: 3px; width: 194px; height: 28px; display: flex; align-items: center; justify-content: space-between; padding: 0 10px 0 1px; background: #fafcff; border: 1px solid #bcc4cc; }
.ime b { color: #4a94d8; font: 700 20px/24px "Noto Sans CJK SC", sans-serif; }

/* status bar */
.status { position: relative; flex: none; height: 28px; display: flex; align-items: center; padding: 0 10px 2px 11px; background: #f3f3f3; border-top: 1px solid #cfcfcf; color: #666; overflow: hidden; }
.pg { width: 204px; white-space: nowrap; }
.lang { margin-left: 21px; }
.nt { margin-left: auto; gap: 5px; }
.cm { margin: 0 25px 0 27px; gap: 5px; }
.vw { width: 50px; height: 28px; justify-content: center; }
.vw:not(.on) { width: 49px; }
.vw.on { background: #cfcfcf; }
.zm { width: 20px; justify-content: center; }
.zr { appearance: none; width: 132px; height: 16px; margin: 0; background: linear-gradient(#aaa, #aaa) center / 100% 1px no-repeat; }
.zr::-webkit-slider-thumb { appearance: none; width: 6px; height: 16px; background: #6c6c6c; }
.pct { width: 36px; margin: 0 15px 0 16px; }
.orb { position: absolute; left: 17px; top: 22px; width: 38px; height: 38px; border: 2px solid #4d7ca8; border-radius: 50%; background: #c9e0f2; }
```
